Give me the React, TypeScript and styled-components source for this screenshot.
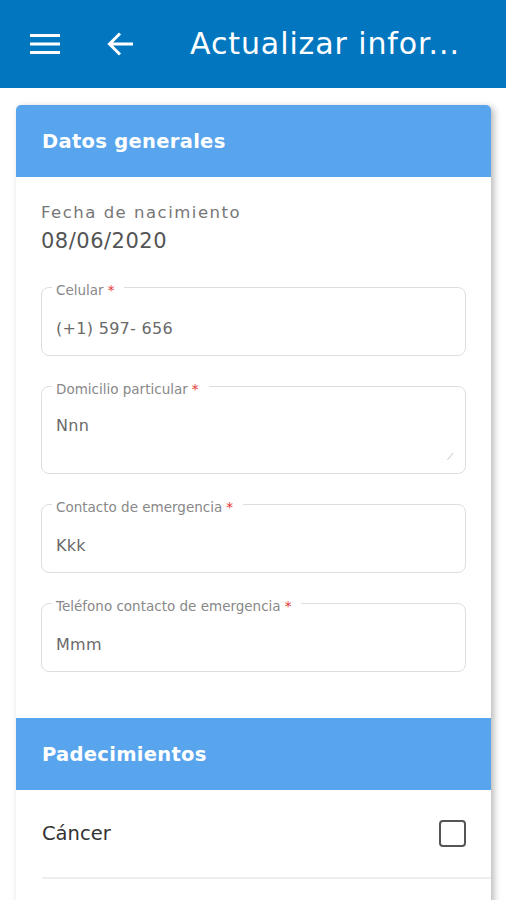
import React from 'react';
import styled, { createGlobalStyle } from 'styled-components';

const GlobalStyle = createGlobalStyle`
  body {
    margin: 0;
    background: #ffffff;
    font-family: 'DejaVu Sans', 'Open Sans', sans-serif;
  }
`

const fields = [
  { label: 'Celular', value: '(+1) 597- 656', tall: false },
  { label: 'Domicilio particular', value: 'Nnn', tall: true },
  { label: 'Contacto de emergencia', value: 'Kkk', tall: false },
  { label: 'Teléfono contacto de emergencia', value: 'Mmm', tall: false },
]

const MenuIcon = () => (
  <svg width="32" height="24" viewBox="0 0 32 24">
    <rect x="1" y="2" width="30" height="3" fill="#fff" />
    <rect x="1" y="10.5" width="30" height="3" fill="#fff" />
    <rect x="1" y="19" width="30" height="3" fill="#fff" />
  </svg>
)

const BackIcon = () => (
  <svg width="28" height="26" viewBox="0 0 28 26">
    <path d="M26 13H3M13 2.5L2.5 13 13 23.5" stroke="#fff" strokeWidth="3" fill="none" />
  </svg>
)

const App: React.FC = () => {
  return (
    <>
      <GlobalStyle />
      <TopBar>
        <IconButton><MenuIcon /></IconButton>
        <IconButton><BackIcon /></IconButton>
        <Title>Actualizar infor...</Title>
      </TopBar>

      <Page>
        <Card>
          <SectionHeader>Datos generales</SectionHeader>
          <SectionBody>
            <StaticLabel>Fecha de nacimiento</StaticLabel>
            <StaticValue>08/06/2020</StaticValue>

            {fields.map(f => (
              <Field key={f.label} tall={f.tall}>
                <Legend>{f.label}<Req>*</Req></Legend>
                <FieldValue>{f.value}</FieldValue>
                {f.tall && <Resize>⟋</Resize>}
              </Field>
            ))}
          </SectionBody>

          <SectionHeader>Padecimientos</SectionHeader>
          <CheckRow>
            <CheckLabel>Cáncer</CheckLabel>
            <CheckBox />
          </CheckRow>
        </Card>
      </Page>
    </>
  )
}

const TopBar = styled.div`
  height: 88px;
  background: #0277c0;
  display: flex;
  align-items: center;
  padding: 0 0 0 29px;
  box-sizing: border-box;
`

const IconButton = styled.div`
  display: flex;
  align-items: center;
  margin-right: 46px;
  &:nth-child(2) { margin-right: 55px; }
`

const Title = styled.div`
  color: #fff;
  font-size: 30px;
  letter-spacing: 0.9px;
  white-space: nowrap;
  margin-top: -2px;
`

const Page = styled.div`
  padding: 17px 15px 0 16px;
`

const Card = styled.div`
  background: #fff;
  border-radius: 5px 5px 0 0;
  box-shadow: 3px 2px 7px rgba(0, 0, 0, 0.28);
  overflow: hidden;
  padding-bottom: 60px;
`

const SectionHeader = styled.div`
  height: 72px;
  background: #58a5ee;
  color: #fff;
  font-size: 19.5px;
  font-weight: 700;
  letter-spacing: 0.3px;
  display: flex;
  align-items: center;
  padding-left: 26px;
`

const SectionBody = styled.div`
  padding: 24px 25px 46px 25px;
`

const StaticLabel = styled.div`
  color: #777;
  font-size: 16.5px;
  letter-spacing: 1.5px;
  line-height: 24px;
`

const StaticValue = styled.div`
  color: #555;
  font-size: 21px;
  letter-spacing: 0.5px;
  line-height: 32px;
  margin-bottom: 30px;
`

const Field = styled.div<{ tall: boolean }>`
  position: relative;
  height: ${p => (p.tall ? 88 : 69)}px;
  box-sizing: border-box;
  border: 1.5px solid #dedede;
  border-radius: 8px;
  margin-bottom: 30px;
  padding: 0 14px;
  display: flex;
  align-items: ${p => (p.tall ? 'flex-start' : 'center')};
  padding-top: ${p => (p.tall ? 29 : 13)}px;
  &:last-child { margin-bottom: 0; }
`

const Legend = styled.div`
  position: absolute;
  top: -6px;
  left: 10px;
  padding: 0 10px 0 4px;
  background: #fff;
  color: #888;
  font-size: 13.5px;
  line-height: 16px;
`

const Req = styled.span`
  color: #e53935;
  margin-left: 4px;
`

const FieldValue = styled.div`
  color: #6a6a6a;
  font-size: 16px;
  letter-spacing: 0.3px;
`

const Resize = styled.span`
  position: absolute;
  right: 12px;
  bottom: 10px;
  color: #aaa;
  font-size: 9px;
`

const CheckRow = styled.div`
  margin-left: 26px;
  height: 87px;
  display: flex;
  align-items: center;
  justify-content: space-between;
  padding-right: 25px;
  border-bottom: 2px solid #eeeeee;
`

const CheckLabel = styled.div`
  color: #333;
  font-size: 19.5px;
`

const CheckBox = styled.div`
  width: 27px;
  height: 27px;
  box-sizing: border-box;
  border: 2.5px solid #555;
  border-radius: 4px;
`

export default App
